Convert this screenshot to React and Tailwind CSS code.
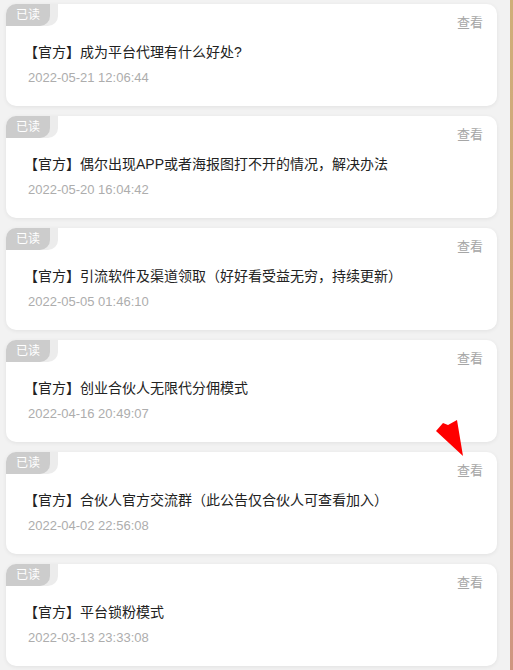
import React from 'react';

const notices = [
  { title: '【官方】成为平台代理有什么好处?', time: '2022-05-21 12:06:44' },
  { title: '【官方】偶尔出现APP或者海报图打不开的情况，解决办法', time: '2022-05-20 16:04:42' },
  { title: '【官方】引流软件及渠道领取（好好看受益无穷，持续更新）', time: '2022-05-05 01:46:10' },
  { title: '【官方】创业合伙人无限代分佣模式', time: '2022-04-16 20:49:07' },
  { title: '【官方】合伙人官方交流群（此公告仅合伙人可查看加入）', time: '2022-04-02 22:56:08' },
  { title: '【官方】平台锁粉模式', time: '2022-03-13 23:33:08' },
];

function NoticeCard({ item }) {
  return (
    <div className="bg-white rounded-[10px] overflow-hidden h-[102px] shadow-[0_1px_4px_rgba(0,0,0,0.07)]">
      <div className="flex justify-between items-start">
        <div className="bg-[#ececec] rounded-br-[10px] pr-[8px]">
          <div className="bg-[#cccccc] rounded-br-[10px] h-[22px] px-[10px] flex items-center text-white text-[12px] leading-none">
            已读
          </div>
        </div>
        <span className="pt-[10px] mr-[14px] text-[13px] leading-[17px] text-[#a6a6a6]">查看</span>
      </div>
      <div className="mt-[11px] pl-[18px] text-[14px] leading-[20px] text-[#222]">{item.title}</div>
      <div className="mt-[6px] pl-[22px] text-[13px] leading-[20px] text-[#adadad]">{item.time}</div>
    </div>
  );
}

export default function App() {
  return (
    <div
      className="relative flex w-[513px] min-h-[670px]"
      style={{ fontFamily: '"Liberation Sans", "Noto Sans CJK SC", sans-serif' }}
    >
      <div className="flex-1 bg-[#f2f2f2] pt-[4px] pb-[4px] pl-[6px] pr-[13px] flex flex-col gap-[10px]">
        {notices.map((n) => (
          <NoticeCard key={n.time} item={n} />
        ))}
      </div>
      <div className="w-[3px] bg-gradient-to-b from-[#cfae78] via-[#d1a27e] to-[#cf9580]" />

      {/* 红色箭头标注 */}
      <svg className="absolute left-[434px] top-[419px]" width="32" height="42" viewBox="0 0 32 42">
        <polygon points="2,12 9,4 14,6 23,1 29,37" fill="#ff0000" />
      </svg>
    </div>
  );
}
